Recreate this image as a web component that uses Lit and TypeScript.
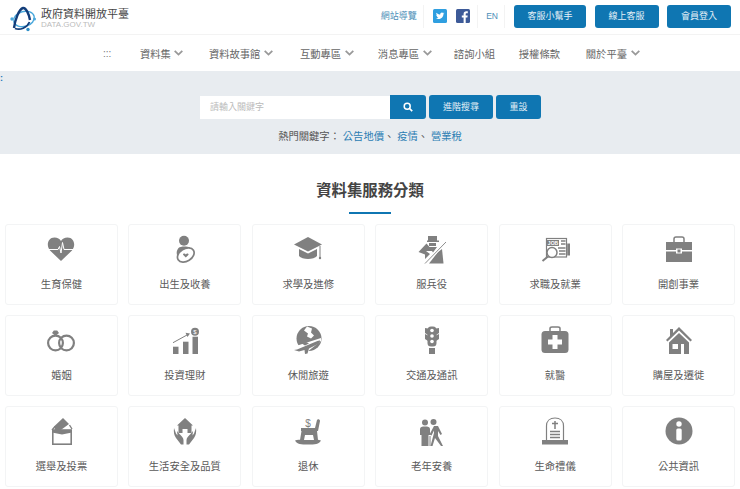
import { LitElement, html, css, svg } from "lit";
import { customElement } from "lit/decorators.js";

const G = "#808080";
const icons: Record<string, unknown> = {
  heart: svg`<path d="M15 27 L4 16.500 C0 12 1.500 3.500 8.500 3.500 C11.500 3.500 13.800 5 15 7 C16.200 5 18.500 3.500 21.500 3.500 C28.500 3.500 30 12 26 16.500Z" fill="${G}"/><path d="M2 15.500H12L13.500 12.500L15 19L16.500 8.500L18 15.500H28" fill="none" stroke="#fff" stroke-width="1"/>`,
  birth: svg`<circle cx="14" cy="6.800" r="5" fill="${G}"/><path d="M8.500 14 C10.500 12 17 12 20 13.500 L20 15.500 C15 15.500 11 19 9.500 25 C6.500 22 5.500 18 8.500 14Z" fill="${G}"/><ellipse cx="15.800" cy="21" rx="9" ry="6.300" transform="rotate(-32 15.800 21)" fill="#fff" stroke="${G}" stroke-width="1.700"/><path d="M15.800 23.500 L13 20.800 C13 19.200 15.200 19.200 15.800 20.600 C16.400 19.200 18.600 19.200 18.600 20.800Z" fill="${G}"/>`,
  grad: svg`<path d="M15 3 L29 10.500 L15 17.500 L1 10.500Z" fill="${G}"/><path d="M6 15 L15 19.500 L24 15 V22 C21 26 9 26 6 22Z" fill="${G}"/><path d="M27 12 V23" stroke="${G}" stroke-width="1"/><circle cx="27" cy="24" r="1.200" fill="${G}"/>`,
  soldier: svg`<path d="M11 2 H20 V6.500 H22 V8 H10 V6.500 H11Z" fill="${G}"/><path d="M12 9 H19 V12 H12Z" fill="${G}"/><path d="M1.500 18 L9.500 9.500 L12.500 13 H20 L16 18.500 L15 17 H9 L13 20 L8 25 L8 20.500Z" fill="${G}"/><path d="M12 29.500 L21 18 L25 15 L26.500 29.500Z" fill="${G}"/><path d="M8 29.500 L29 8" stroke="#fff" stroke-width="2.600"/><path d="M8 29.500 L29 8" stroke="${G}" stroke-width="0.900"/>`,
  job: svg`<rect x="6.500" y="4.500" width="20" height="18.500" fill="#fff" stroke="${G}" stroke-width="1.200"/><rect x="7" y="6" width="12" height="6" fill="${G}"/><text x="13" y="11" font-size="5" font-weight="700" text-anchor="middle" fill="#fff" font-family="Liberation Sans">JOB</text><path d="M21 7H25.500M21 10H25.500M18 14H25.500M19 17H25.500M19 20H25.500" stroke="${G}" stroke-width="1.400"/><rect x="27.200" y="9.500" width="3.300" height="12" fill="${G}"/><circle cx="12" cy="18.500" r="5" fill="#fff" stroke="${G}" stroke-width="1.500"/><path d="M8 22.500 L2.500 27" stroke="${G}" stroke-width="2"/>`,
  case: svg`<path d="M10 8 V5 C10 3.500 11 3 12 3 H18 C19 3 20 3.500 20 5 V8" fill="none" stroke="${G}" stroke-width="1.500"/><path d="M2 8 H28 V16 H18 V14.500 H12 V16 H2Z" fill="${G}"/><path d="M2 17.500 H12 V19.500 H18 V17.500 H28 V28 H2Z" fill="${G}"/><rect x="13.500" y="15.500" width="3" height="3" fill="${G}"/>`,
  rings: svg`<circle cx="9.500" cy="18" r="7.400" fill="none" stroke="${G}" stroke-width="2.200"/><circle cx="20.500" cy="18" r="7.400" fill="none" stroke="${G}" stroke-width="2.200"/><path d="M6 8 L7.800 5.500 H11.200 L13 8 L9.500 11Z" fill="${G}"/>`,
  chart: svg`<rect x="3" y="21.700" width="5.500" height="7.300" fill="${G}"/><rect x="13" y="16.700" width="5.500" height="12.300" fill="${G}"/><rect x="22.500" y="11.700" width="5.500" height="17.300" fill="${G}"/><path d="M3 17.700 L17 10" stroke="${G}" stroke-width="1"/><path d="M15.500 7.800 L20 8.500 L17.500 12Z" fill="${G}"/><circle cx="25" cy="6.700" r="4" fill="${G}"/><text x="25" y="9" font-size="6" text-anchor="middle" fill="#fff" font-family="Liberation Sans">$</text>`,
  globe: svg`<circle cx="16" cy="13.500" r="12.500" fill="${G}"/><path d="M14 1.500 L11 5.500 L15 8.500 L14 11.500 L18 13.500 L21 10.500 L18 7.500 L19 3.500Z M3 21 L28 13 V16 L14 27 H4Z" fill="#fff"/><path d="M1 25 L4 24.500 L22 17 C24.500 16 27.500 14.500 27 16.500 C26.500 18 24 19.500 22 20.500 L16 23.500 L14.500 28.500 L12 29 L11.500 25 L6 26.500Z M8 18 L12 16.500 L16 18.500 L12 20.500Z" fill="${G}"/>`,
  light: svg`<path d="M8 3 L11 3.500 V10 L8 8Z M22 3 L19 3.500 V10 L22 8Z M8 9 L11 10.500 V16 L8 14Z M22 9 L19 10.500 V16 L22 14Z" fill="${G}"/><rect x="10.500" y="1.500" width="9" height="20" rx="3.500" fill="${G}"/><circle cx="15" cy="5.500" r="1.800" fill="#fff"/><circle cx="15" cy="11" r="1.800" fill="#fff"/><circle cx="15" cy="16.500" r="1.800" fill="#fff"/><rect x="12" y="23" width="6" height="6" fill="${G}"/>`,
  med: svg`<path d="M10 6 V3.500 C10 2.500 11 2 12 2 H18 C19 2 20 2.500 20 3.500 V6" fill="none" stroke="${G}" stroke-width="1.500"/><rect x="1.500" y="6" width="27" height="22" rx="3.500" fill="${G}"/><path d="M12.500 10 H17.500 V14.500 H22 V19.500 H17.500 V24 H12.500 V19.500 H8 V14.500 H12.500Z" fill="#fff"/>`,
  house: svg`<path d="M15 2 L28 15 L26.500 16.500 L15 5.500 L3.500 16.500 L2 15 L6 11 V4 H9 V8Z" fill="${G}"/><path fill-rule="evenodd" d="M15 8 L25 17.500 V29 H20 V19 H17 V29 H5 V17.500Z M8.500 19 V24 H14 V19Z" fill="${G}"/>`,
  vote: svg`<path d="M8 10.500 L17 2 L23 8 L13.500 15 H9.500Z" fill="${G}"/><path d="M6 14 L9 10.500 M23.500 9 L26 13" stroke="${G}" stroke-width="1.400"/><rect x="6.800" y="14" width="18.400" height="14.200" fill="none" stroke="${G}" stroke-width="1.600"/><path d="M6 14 H26 V16.500 L16 18.500 L6 16.500Z" fill="${G}"/>`,
  safe: svg`<path d="M15 2 L23 9.500 H21.500 V17 H17.500 V13 H12.500 V17 H8.500 V9.500 H7Z" fill="${G}"/><path d="M4 12 C3.500 16 4 19 6 22 L11 28.500 L13.500 28.500 V24 C13.500 21.500 11 19.500 9.500 18 L7 15 L7.500 19.500 L6 17.500Z M26 12 C26.500 16 26 19 24 22 L19 28.500 L16.500 28.500 V24 C16.500 21.500 19 19.500 20.500 18 L23 15 L22.500 19.500 L24 17.500Z" fill="${G}"/>`,
  rock: svg`<text x="15" y="10.500" font-size="10" text-anchor="middle" fill="${G}" font-family="Liberation Sans">$</text><path d="M8 12 H22 L24 4 C24.500 2.500 27 3 27 5 L25 15 H8Z" fill="${G}"/><path d="M8.500 15 H24 L25 24 H21 L20 19 H12 L11 24 H7Z" fill="${G}"/><path d="M2 24.500 C5 23 7 24 11 24 H19 C23 24 25 23 28 24.500 C26 28.500 22 28.500 15 28.500 C8 28.500 4 28.500 2 24.500Z" fill="${G}"/>`,
  elder: svg`<g transform="translate(0 2)"><circle cx="8" cy="4.500" r="3" fill="${G}"/><circle cx="16.500" cy="4" r="3" fill="${G}"/><path d="M3 11 C3 9 5 8.500 8 8.500 C11 8.500 13 9 13 11 V17 H11.500 V28 H4.500 V17 H3Z" fill="${G}"/><path d="M12.500 16.500 L17 8 L21 8 L25 16 L23.500 17 L21 13 L21 18 L26 28 H24 L18 20 L15.500 28 H13.500 L17 15 V12.500 L14.500 17.500Z" fill="${G}"/><path d="M13 18 V28" stroke="${G}" stroke-width="1"/></g>`,
  grave: svg`<path d="M6.500 25 V10 C6.500 5 10 2 15 2 C20 2 23.500 5 23.500 10 V25" fill="none" stroke="${G}" stroke-width="1.200"/><path d="M15 5 V13 M12 7.500 H18" stroke="${G}" stroke-width="1.500"/><path d="M10 15.500H20M10 18.500H20M10 21.500H20" stroke="${G}" stroke-width="1.300"/><rect x="2" y="24" width="26" height="4.500" fill="${G}"/>`,
  info: svg`<circle cx="15" cy="15" r="13.500" fill="${G}"/><circle cx="15" cy="8" r="2.700" fill="#fff"/><rect x="12.300" y="12.500" width="5.400" height="12" rx="1.500" fill="#fff"/>`,
};

const cards: [string, string][] = [
  ["heart", "生育保健"], ["birth", "出生及收養"], ["grad", "求學及進修"], ["soldier", "服兵役"], ["job", "求職及就業"], ["case", "開創事業"],
  ["rings", "婚姻"], ["chart", "投資理財"], ["globe", "休閒旅遊"], ["light", "交通及通訊"], ["med", "就醫"], ["house", "購屋及遷徙"],
  ["vote", "選舉及投票"], ["safe", "生活安全及品質"], ["rock", "退休"], ["elder", "老年安養"], ["grave", "生命禮儀"], ["info", "公共資訊"],
];

const nav: [string, boolean, number][] = [
  ["資料集", true, 25.5], ["資料故事館", true, 27], ["互動專區", true, 24.3], ["消息專區", true, 22.3], ["諮詢小組", false, 23.8], ["授權條款", false, 25.8], ["關於平臺", true, 0],
];

@customElement("app-root")
export class AppRoot extends LitElement {
  static styles = css`
    :host {
      display: block;
      width: 740px;
      height: 489px;
      overflow: hidden;
      background: #fff;
      color: #555;
      font-family: "Liberation Sans", "Noto Sans CJK TC", sans-serif;
    }
    a { text-decoration: none; color: inherit; }
    svg { display: block; }
    .header {
      height: 35px;
      display: flex;
      align-items: center;
      padding: 0 9px 2px 10px;
      box-sizing: border-box;
      border-bottom: 1px solid #f3f3f3;
    }
    .logo { display: flex; align-items: center; gap: 5px; margin-top: 6px; }
    .logo-text { display: flex; flex-direction: column; padding-bottom: 1px; }
    .logo-title { font-size: 11px; line-height: 12px; color: #444; font-weight: 400; }
    .logo-sub { font-size: 8px; line-height: 10px; color: #bbb; }
    .tools { margin-left: auto; display: flex; align-items: center; height: 23px; }
    .site { font-size: 9px; color: #4d8fb8; padding-right: 6px; margin-right: 9px; line-height: 23px; border-right: 1px solid #f3f3f3; }
    .social { width: 14px; height: 14px; margin-right: 9.500px; }
    .social.fb { margin-right: 7px; }
    .en { font-size: 8.500px; color: #4d8fb8; line-height: 23px; padding: 0 6px 0 8px; border-left: 1px solid #f3f3f3; border-right: 1px solid #f3f3f3; margin-right: 9px; }
    .btns { display: flex; gap: 8.500px; }
    .btn {
      background: #0f76b2;
      color: #e4f0f7;
      font-size: 9px;
      height: 23px;
      line-height: 23px;
      border-radius: 3px;
      text-align: center;
    }
    .b72 { width: 72px; }
    .b64 { width: 64px; }
    .nav {
      height: 36px;
      display: flex;
      align-items: center;
      padding-left: 103px;
      font-size: 10.300px;
      color: #666;
    }
    .nav-dots { color: #777; margin-right: 29px; font-size: 10px; width: 8px; }
    .nav-item { display: flex; align-items: center; gap: 3.500px; white-space: nowrap; }
    .band {
      height: 83px;
      background: #e8ecf0;
      display: flex;
      flex-direction: column;
      align-items: center;
      position: relative;
    }
    .colon { position: absolute; left: 0; top: 0; font-size: 9px; line-height: 14px; color: #1a78b8; font-weight: 700; }
    .search { display: flex; margin-top: 24px; height: 24px; align-items: center; margin-left: 1px; }
    .input {
      width: 190px;
      height: 23px;
      background: #fff;
      box-sizing: border-box;
      padding-left: 10px;
      line-height: 23px;
      font-size: 9px;
      color: #bbb;
    }
    .sbtn { background: #0f76b2; color: #e4f0f7; height: 24px; line-height: 24px; font-size: 9px; border-radius: 3px; text-align: center; margin-left: 3px; }
    .go { width: 36px; margin-left: 0; display: flex; align-items: center; justify-content: center; border-radius: 0 3px 3px 0; }
    .w64 { width: 64px; }
    .w45 { width: 45px; }
    .hot { font-size: 10.300px; line-height: 14px; margin-top: 11px; color: #555; }
    .hot a { color: #2b7db3; }
    .title-wrap { display: flex; flex-direction: column; align-items: center; padding-top: 26px; }
    .title { font-size: 15.400px; line-height: 22px; font-weight: 700; color: #444; }
    .bar { width: 42px; height: 2px; background: #0f76b2; margin-top: 10px; }
    .grid {
      margin-top: 10px;
      padding: 0 5px;
      display: grid;
      grid-template-columns: repeat(6, 1fr);
      grid-auto-rows: 80.500px;
      gap: 10.500px;
    }
    .card {
      border: 1px solid #f3f4f5;
      border-radius: 3px;
      display: flex;
      flex-direction: column;
      align-items: center;
      padding-top: 9px;
      box-sizing: border-box;
    }
    .card svg { width: 30px; height: 30px; flex: none; }
    .card span { font-size: 10.300px; line-height: 14px; color: #5a5a5a; margin-top: 14px; }
  `;

  render() {
    return html`
      <div class="header">
        <a class="logo">
          <svg width="26" height="26" viewBox="0 0 26 26">
            <ellipse cx="14" cy="13" rx="10.500" ry="7.500" fill="none" stroke="#4aa8dc" stroke-width="1.400" transform="rotate(-15 14 13)"/>
            <path d="M4 22 C5 14 9 3 13 2 C16 1.500 19 8 20 14" fill="none" stroke="#123d7a" stroke-width="2.400"/>
            <path d="M5 22.500 C10 24.500 17 22 19.500 16" fill="none" stroke="#123d7a" stroke-width="1.800"/>
            <circle cx="2" cy="13" r="1.700" fill="#4aa8dc"/><circle cx="24.500" cy="13" r="1.500" fill="#4aa8dc"/><circle cx="18" cy="23.500" r="1.700" fill="#2f90c8"/>
          </svg>
          <div class="logo-text"><div class="logo-title">政府資料開放平臺</div><div class="logo-sub">DATA.GOV.TW</div></div>
        </a>
        <div class="tools">
          <a class="site">網站導覽</a>
          <svg class="social" viewBox="0 0 14 14"><rect width="14" height="14" rx="1.500" fill="#2f9fe0"/><path d="M11.500 4.300c-.3.100-.7.200-1 .3.400-.2.600-.6.800-1-.3.200-.7.300-1.100.4a1.800 1.800 0 0 0-3 1.600C5.700 5.500 4.400 4.800 3.500 3.700c-.5.800-.2 1.800.5 2.300-.3 0-.5-.1-.8-.2 0 .8.600 1.600 1.400 1.700-.2.100-.5.100-.8 0 .2.700.9 1.200 1.600 1.200-.7.600-1.600.8-2.500.7 2.900 1.700 7.400.4 7.700-4.800.3-.1.600-.4.900-.7z" fill="#fff"/></svg>
          <svg class="social fb" viewBox="0 0 14 14"><rect width="14" height="14" rx="1.500" fill="#3d5a98"/><path d="M9.700 14V8.600h1.700l.3-2.100h-2V5.200c0-.6.200-1 1-1h1.100V2.300c-.2 0-.8-.1-1.500-.1-1.600 0-2.700 1-2.700 2.700v1.600H5.800v2.100h1.800V14z" fill="#fff"/></svg>
          <a class="en">EN</a>
          <div class="btns">
            <a class="btn b72">客服小幫手</a>
            <a class="btn b64">線上客服</a>
            <a class="btn b64">會員登入</a>
          </div>
        </div>
      </div>
      <div class="nav">
        <span class="nav-dots">:::</span>
        ${nav.map(([t, c, m]) => html`<a class="nav-item" style="margin-right:${m}px">${t}${c ? html`<svg width="9" height="6" viewBox="0 0 9 6"><path d="M0.700 0.800 L4.500 4.600 L8.300 0.800" fill="none" stroke="#999" stroke-width="1.800"/></svg>` : ""}</a>`)}
      </div>
      <div class="band">
        <span class="colon">:</span>
        <div class="search">
          <div class="input">請輸入關鍵字</div>
          <a class="sbtn go"><svg width="10" height="10" viewBox="0 0 10 10"><circle cx="4.200" cy="4.200" r="3" fill="none" stroke="#fff" stroke-width="1.500"/><path d="M6.500 6.500 L9.200 9.200" stroke="#fff" stroke-width="1.700"/></svg></a>
          <a class="sbtn w64">進階搜尋</a>
          <a class="sbtn w45">重設</a>
        </div>
        <div class="hot">熱門關鍵字： <a>公告地價</a>、 <a>疫情</a>、 <a>營業稅</a></div>
      </div>
      <div class="title-wrap"><div class="title">資料集服務分類</div><div class="bar"></div></div>
      <div class="grid">
        ${cards.map(([i, t]) => html`<a class="card"><svg viewBox="0 0 30 30">${icons[i]}</svg><span>${t}</span></a>`)}
      </div>
    `;
  }
}
